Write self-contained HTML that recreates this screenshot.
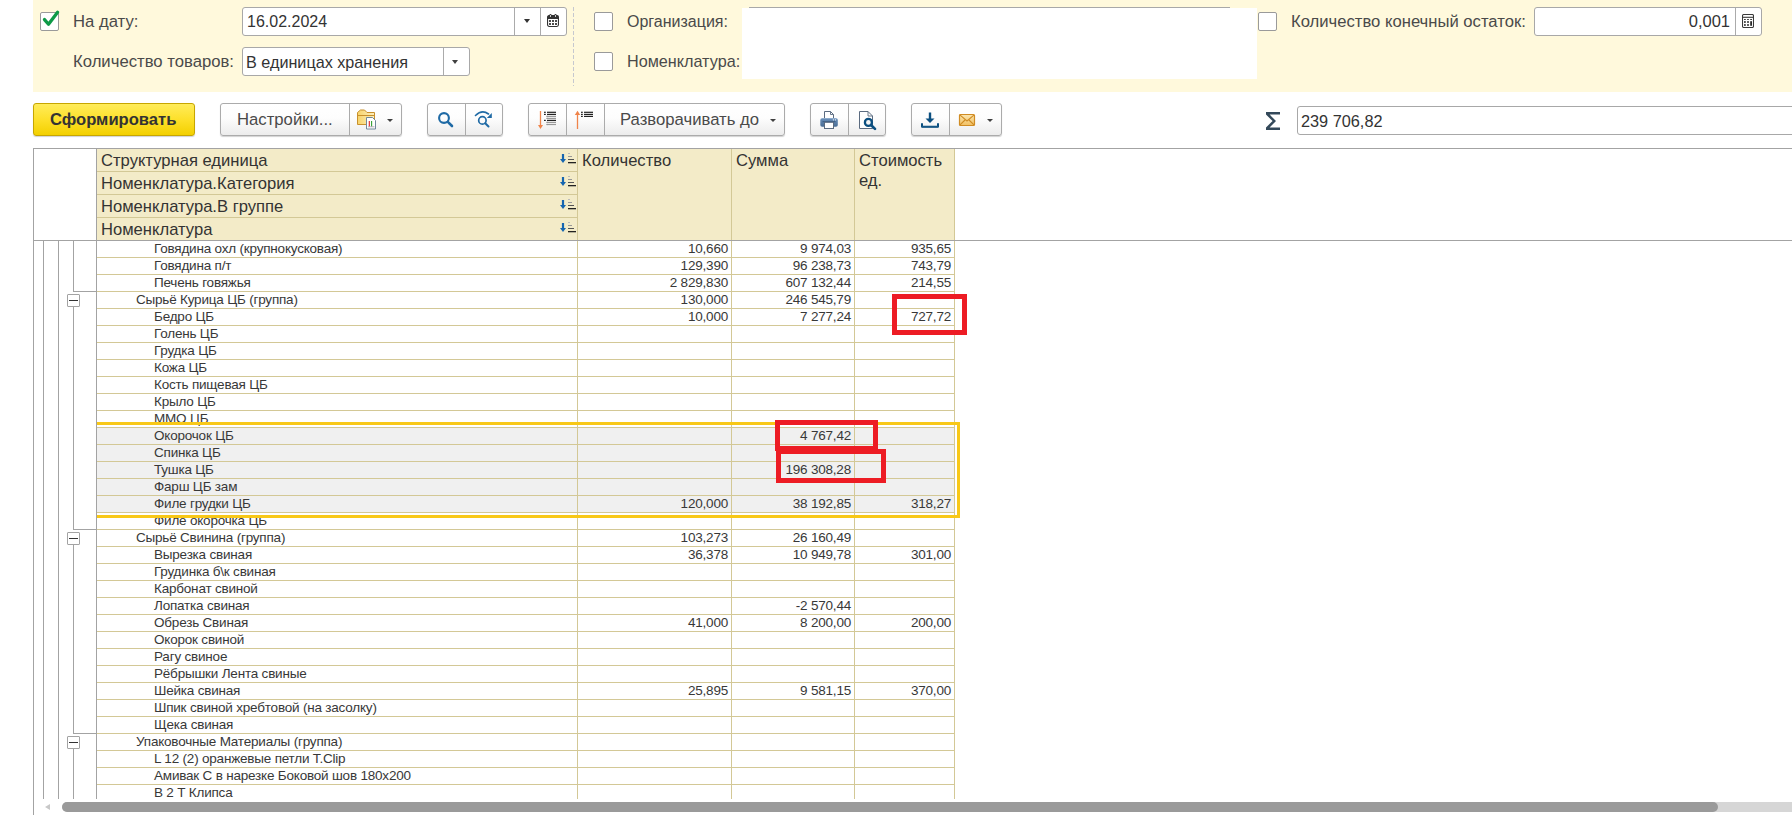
<!DOCTYPE html>
<html><head><meta charset="utf-8"><style>
*{box-sizing:border-box;margin:0;padding:0}
html,body{width:1792px;height:815px;overflow:hidden;background:#fff}
body{position:relative;font-family:"Liberation Sans",sans-serif;color:#404040}
.abs{position:absolute}
.lbl{position:absolute;font-size:16.7px;color:#4a4a4a;white-space:pre;line-height:20px;margin-top:1px}
.inp{position:absolute;background:#fff;border:1px solid #a8a8a8;border-radius:3px}
.cb{position:absolute;width:19px;height:19px;background:#fff;border:1px solid #9a9a9a;border-radius:2px}
.btn{position:absolute;height:33px;border:1px solid #ababab;border-radius:3px;background:linear-gradient(#ffffff 0%,#fdfdfd 45%,#ececec 100%);box-shadow:0 1px 1px rgba(0,0,0,.18)}
.sep{position:absolute;top:0;bottom:0;width:1px;background:#ababab}
.dd{position:absolute;width:0;height:0;border-left:3.5px solid transparent;border-right:3.5px solid transparent;border-top:4px solid #404040}
.t{position:absolute;white-space:pre;font-size:13.5px;letter-spacing:-0.2px;line-height:17px;color:#383838}
.r{text-align:right}
.hl{position:absolute;height:1px;background:#d3c896}
.vl{position:absolute;width:1px;background:#d3c896}
.gl{position:absolute;background:#a3a3a3}
</style></head><body>

<div class="abs" style="left:33px;top:0;width:1759px;height:92px;background:#fff9dc"></div>
<div class="cb" style="left:40px;top:12px"></div>
<svg class="abs" style="left:40px;top:9px" width="22" height="22" viewBox="0 0 22 22"><path d="M4.5 10.6 L8.5 15.3 L17.6 3.3" fill="none" stroke="#0e9a47" stroke-width="3.3" stroke-linecap="round" stroke-linejoin="round"/></svg>
<div class="lbl" style="left:73px;top:11px">На дату:</div>
<div class="lbl" style="left:73px;top:51px">Количество товаров:</div>
<div class="inp" style="left:242px;top:7px;width:325px;height:29px"><div class="sep" style="left:271px"></div><div class="sep" style="left:297px"></div></div>
<div class="lbl" style="left:247px;top:11px;font-size:16px;color:#333">16.02.2024</div>
<svg class="abs" style="left:547px;top:14px" width="12" height="13" viewBox="0 0 12 13"><rect x="0.55" y="1.55" width="10.9" height="10.9" rx="1.6" fill="#fff" stroke="#333" stroke-width="1.1"/><rect x="0.5" y="1.5" width="11" height="3.6" rx="1.2" fill="#333"/><rect x="2.4" y="0" width="2.2" height="3.6" rx="1.1" fill="#333"/><rect x="7.4" y="0" width="2.2" height="3.6" rx="1.1" fill="#333"/><ellipse cx="3.5" cy="2" rx=".5" ry="1" fill="#fff"/><ellipse cx="8.5" cy="2" rx=".5" ry="1" fill="#fff"/><g fill="#222"><rect x="2.1" y="6.1" width="1.8" height="1.8"/><rect x="5.1" y="6.1" width="1.8" height="1.8"/><rect x="8.1" y="6.1" width="1.8" height="1.8"/><rect x="2.1" y="9.1" width="1.8" height="1.8"/><rect x="5.1" y="9.1" width="1.8" height="1.8"/><rect x="8.1" y="9.1" width="1.8" height="1.8"/></g></svg>
<div class="dd" style="left:524px;top:19px;border-left-width:3px;border-right-width:3px;border-top-width:4px;border-top-color:#333"></div>
<div class="inp" style="left:242px;top:47px;width:228px;height:29px"><div class="sep" style="left:200px"></div></div>
<div class="lbl" style="left:246px;top:51px;font-size:16.2px;color:#333">В единицах хранения</div>
<div class="dd" style="left:452px;top:60px"></div>
<div class="abs" style="left:573px;top:7px;width:1px;height:79px;background:repeating-linear-gradient(#c6c8cf 0 4px,transparent 4px 6px)"></div>
<div class="cb" style="left:594px;top:12px"></div>
<div class="lbl" style="left:627px;top:11px;font-size:16px">Организация:</div>
<div class="cb" style="left:594px;top:52px"></div>
<div class="lbl" style="left:627px;top:50px;font-size:16.2px">Номенклатура:</div>
<div class="abs" style="left:749px;top:7px;width:481px;height:1px;background:#a8a8a8"></div>
<div class="abs" style="left:742px;top:8px;width:515px;height:71px;background:#fff"></div>
<div class="cb" style="left:1258px;top:12px"></div>
<div class="lbl" style="left:1291px;top:11px;font-size:16.65px">Количество конечный остаток:</div>
<div class="inp" style="left:1534px;top:7px;width:228px;height:29px"><div class="sep" style="left:200px"></div></div>
<div class="lbl" style="left:1600px;top:10px;width:130px;text-align:right;font-size:16.5px;color:#333">0,001</div>
<svg class="abs" style="left:1742px;top:14px" width="12" height="14" viewBox="0 0 12 14"><rect x="0.5" y="0.5" width="11" height="13" rx="1.2" fill="#fff" stroke="#3a3a3a" stroke-width="1.1"/><line x1="0.5" y1="3.3" x2="11.5" y2="3.3" stroke="#3a3a3a" stroke-width="1.1"/><g fill="#2a2a2a"><rect x="2" y="5" width="1.8" height="0.9"/><rect x="5.1" y="5" width="1.8" height="0.9"/><rect x="8.2" y="5" width="1.8" height="0.9"/><rect x="2" y="7.2" width="1.8" height="1.6"/><rect x="5.1" y="7.2" width="1.8" height="1.6"/><rect x="8.2" y="7.2" width="1.8" height="4.6"/><rect x="2" y="10.2" width="1.8" height="1.6"/><rect x="5.1" y="10.2" width="1.8" height="1.6"/></g></svg>
<div class="btn" style="left:33px;top:103px;width:162px;border-color:#c7a600;background:linear-gradient(#ffec5a 0%,#fde02a 50%,#f3d000 100%)"></div>
<div class="lbl" style="left:50px;top:109px;font-weight:bold;font-size:16.6px;color:#333">Сформировать</div>
<div class="btn" style="left:220px;top:103px;width:182px"><div class="sep" style="left:128px"></div></div>
<div class="lbl" style="left:237px;top:109px">Настройки...</div>
<svg class="abs" style="left:356px;top:109px" width="24" height="22" viewBox="0 0 24 22"><defs><linearGradient id="fg" x1="0" y1="0" x2="1" y2="0"><stop offset="0" stop-color="#f7d36a"/><stop offset="1" stop-color="#fdf0c0"/></linearGradient></defs><path d="M1.5 15.5 L1.5 3.5 L4.5 1 L8.5 1 L11 3.5 L18.5 3.5 L18.5 15.5 Z" fill="url(#fg)" stroke="#c8902c" stroke-width="1"/><line x1="1.5" y1="6.5" x2="18.5" y2="6.5" stroke="#c8902c" stroke-width="1"/><path d="M10.5 8.5 L16.5 8.5 L19.5 11.5 L19.5 20 L10.5 20 Z" fill="#fff" stroke="#70889a" stroke-width="1"/><line x1="13.3" y1="12" x2="13.3" y2="17.5" stroke="#e02020" stroke-width="1.1"/><line x1="15.6" y1="12" x2="15.6" y2="17.5" stroke="#30a030" stroke-width="1.1"/><line x1="12" y1="17.8" x2="18.5" y2="17.8" stroke="#9a8aa0" stroke-width=".7"/></svg>
<div class="dd" style="left:387px;top:119px;border-left-width:3px;border-right-width:3px;border-top-width:3px"></div>
<div class="btn" style="left:427px;top:103px;width:76px"><div class="sep" style="left:37px"></div></div>
<svg class="abs" style="left:434px;top:108px" width="24" height="24" viewBox="0 0 24 24"><circle cx="10" cy="10" r="4.9" fill="none" stroke="#1f6aa5" stroke-width="2.1"/><line x1="13.8" y1="13.8" x2="18" y2="18" stroke="#1f6aa5" stroke-width="2.6" stroke-linecap="round"/></svg>
<svg class="abs" style="left:472px;top:108px" width="24" height="24" viewBox="0 0 24 24"><path d="M3.5 7.5 Q10 1 16.5 6" fill="none" stroke="#1f6aa5" stroke-width="1.6" stroke-linecap="round"/><path d="M19.8 5 L19.8 10 L14.8 10 Z" fill="#1f6aa5"/><circle cx="10.4" cy="12.4" r="3.7" fill="none" stroke="#1f6aa5" stroke-width="1.7"/><line x1="13.2" y1="15.2" x2="16.5" y2="18.5" stroke="#1f6aa5" stroke-width="2" stroke-linecap="round"/></svg>
<div class="btn" style="left:528px;top:103px;width:257px"><div class="sep" style="left:37px"></div><div class="sep" style="left:75px"></div></div>
<svg class="abs" style="left:534px;top:108px" width="26" height="24" viewBox="0 0 26 24"><line x1="6.5" y1="3" x2="6.5" y2="18" stroke="#f0844a" stroke-width="1.3"/><path d="M4 17 L9 17 L6.5 21 Z" fill="#f0844a"/><rect x="10" y="3.6999999999999997" width="1.8" height="1.2" fill="#222"/><rect x="13" y="3.6999999999999997" width="9" height="1.2" fill="#222"/><rect x="10" y="5.800000000000001" width="1.8" height="1.2" fill="#222"/><rect x="13" y="5.800000000000001" width="9" height="1.2" fill="#222"/><rect x="12.3" y="7.800000000000001" width="1.8" height="1.2" fill="#999"/><rect x="13" y="7.800000000000001" width="9" height="1.2" fill="#999"/><rect x="12.3" y="9.8" width="1.8" height="1.2" fill="#999"/><rect x="13" y="9.8" width="9" height="1.2" fill="#999"/><rect x="10" y="11.8" width="1.8" height="1.2" fill="#222"/><rect x="13" y="11.8" width="9" height="1.2" fill="#222"/><rect x="12.3" y="13.8" width="1.8" height="1.2" fill="#999"/><rect x="13" y="13.8" width="9" height="1.2" fill="#999"/><rect x="12.3" y="15.9" width="1.8" height="1.2" fill="#999"/><rect x="13" y="15.9" width="9" height="1.2" fill="#999"/></svg>
<svg class="abs" style="left:571px;top:108px" width="26" height="24" viewBox="0 0 26 24"><line x1="6.5" y1="5" x2="6.5" y2="21" stroke="#f0844a" stroke-width="1.3"/><path d="M3.8 7 L9.2 7 L6.5 2.8 Z" fill="#f0844a"/><g fill="#222"><rect x="10" y="3.7" width="1.8" height="1.2"/><rect x="13" y="3.7" width="9" height="1.2"/><rect x="10" y="5.8" width="1.8" height="1.2"/><rect x="13" y="5.8" width="9" height="1.2"/><rect x="10" y="7.8" width="1.8" height="1.2"/><rect x="13" y="7.8" width="9" height="1.2"/></g></svg>
<div class="lbl" style="left:620px;top:109px">Разворачивать до</div>
<div class="dd" style="left:770px;top:119px;border-left-width:3px;border-right-width:3px;border-top-width:3px"></div>
<div class="btn" style="left:810px;top:103px;width:76px"><div class="sep" style="left:37px"></div></div>
<svg class="abs" style="left:812px;top:104px" width="74" height="30" viewBox="0 0 74 30"><defs><linearGradient id="pg" x1="0" y1="0" x2="0" y2="1"><stop offset="0" stop-color="#6a90bb"/><stop offset="1" stop-color="#4a6d94"/></linearGradient></defs><path d="M12.5 14 V7.5 H18.5 L21.5 10.5 V14" fill="#fff" stroke="#5b6b80" stroke-width="1"/><path d="M18.5 7.5 V10.5 H21.5" fill="none" stroke="#5b6b80" stroke-width=".9"/><rect x="8.3" y="14.3" width="17.5" height="8.4" rx="1.8" fill="url(#pg)"/><rect x="10.5" y="17.1" width="13" height="1.1" fill="#3f5f85"/><circle cx="21.4" cy="15.8" r=".65" fill="#fff"/><circle cx="23.5" cy="15.8" r=".65" fill="#fff"/><rect x="12.5" y="18.3" width="9" height="6.2" fill="#fff" stroke="#5b6b80" stroke-width="1"/><path d="M47.5 7.5 H56 L60.5 12 V24.5 H47.5 Z" fill="#fff" stroke="#5b6b80" stroke-width="1"/><path d="M56 7.5 V12 H60.5" fill="none" stroke="#5b6b80" stroke-width=".9"/><circle cx="56.4" cy="18.4" r="3.5" fill="#f6f6f6" stroke="#0b4f80" stroke-width="2.3"/><line x1="59.2" y1="21.2" x2="63" y2="24.9" stroke="#0b4f80" stroke-width="2.7" stroke-linecap="round"/></svg>
<div class="btn" style="left:911px;top:103px;width:91px"><div class="sep" style="left:37px"></div></div>
<svg class="abs" style="left:920px;top:111px" width="20" height="18" viewBox="0 0 20 18"><line x1="10" y1="1.5" x2="10" y2="9" stroke="#0b4f80" stroke-width="2.4"/><path d="M5.5 7.5 L14.5 7.5 L10 12 Z" fill="#0b4f80"/><path d="M2 13 L2 15.7 L18 15.7 L18 13" fill="none" stroke="#0b4f80" stroke-width="2" stroke-linejoin="round" stroke-linecap="round"/><rect x="2" y="15.2" width="16" height="1.2" fill="#1a5a88"/></svg>
<svg class="abs" style="left:958px;top:113px" width="18" height="14" viewBox="0 0 18 14"><defs><linearGradient id="eg" x1="0" y1="0" x2="0" y2="1"><stop offset="0" stop-color="#fbe6b0"/><stop offset="1" stop-color="#f2c062"/></linearGradient></defs><rect x="1.5" y="1.5" width="15" height="11" rx="1" fill="url(#eg)" stroke="#d08c24" stroke-width="1.2"/><path d="M1.8 1.8 L9 8 L16.2 1.8 M1.8 12.2 L7 7 M16.2 12.2 L11 7" fill="none" stroke="#d08c24" stroke-width="1.1"/></svg>
<div class="dd" style="left:987px;top:119px;border-left-width:3px;border-right-width:3px;border-top-width:3px"></div>
<svg class="abs" style="left:1265px;top:111px" width="17" height="20" viewBox="0 0 17 20"><path d="M1 1 L15 1 L15 3.6 L4.6 3.6 L11 10 L4.6 16.4 L15 16.4 L15 19 L1 19 L1 16.6 L7.6 10 L1 3.4 Z" fill="#34495a"/></svg>
<div class="inp" style="left:1297px;top:106px;width:520px;height:29px;border-radius:3px"></div>
<div class="lbl" style="left:1301px;top:110px;font-size:16.3px;color:#333">239 706,82</div>
<div class="gl" style="left:33px;top:148px;width:1759px;height:1px"></div>
<div class="gl" style="left:33px;top:148px;width:1px;height:667px"></div>
<div class="abs" style="left:97px;top:149px;width:858px;height:91px;background:#f3ebc8"></div>
<div class="hl" style="left:97px;top:171px;width:480px"></div>
<div class="hl" style="left:97px;top:194px;width:480px"></div>
<div class="hl" style="left:97px;top:217px;width:480px"></div>
<div class="vl" style="left:577px;top:149px;height:91px"></div>
<div class="vl" style="left:731px;top:149px;height:91px"></div>
<div class="vl" style="left:854px;top:149px;height:91px"></div>
<div class="vl" style="left:954px;top:149px;height:91px"></div>
<div class="gl" style="left:96px;top:149px;width:1px;height:650px"></div>
<div class="gl" style="left:33px;top:240px;width:1759px;height:1px"></div>
<div class="lbl" style="left:101px;top:150px;font-size:16.6px;color:#333">Структурная единица</div>
<div class="lbl" style="left:101px;top:173px;font-size:16.6px;color:#333">Номенклатура.Категория</div>
<div class="lbl" style="left:101px;top:196px;font-size:16.6px;color:#333">Номенклатура.В группе</div>
<div class="lbl" style="left:101px;top:219px;font-size:16.6px;color:#333">Номенклатура</div>
<svg class="abs" style="left:558px;top:152px" width="19" height="16" viewBox="0 0 19 16"><line x1="5" y1="2" x2="5" y2="7.5" stroke="#1565b0" stroke-width="2.2"/><path d="M2 7 L8 7 L5 11 Z" fill="#1565b0"/><rect x="10" y="1" width="2" height="1" fill="#bbb"/><rect x="10" y="4" width="4" height="1" fill="#999"/><rect x="10" y="7" width="6" height="1" fill="#555"/><rect x="10" y="10" width="8" height="1.3" fill="#222"/></svg>
<svg class="abs" style="left:558px;top:175px" width="19" height="16" viewBox="0 0 19 16"><line x1="5" y1="2" x2="5" y2="7.5" stroke="#1565b0" stroke-width="2.2"/><path d="M2 7 L8 7 L5 11 Z" fill="#1565b0"/><rect x="10" y="1" width="2" height="1" fill="#bbb"/><rect x="10" y="4" width="4" height="1" fill="#999"/><rect x="10" y="7" width="6" height="1" fill="#555"/><rect x="10" y="10" width="8" height="1.3" fill="#222"/></svg>
<svg class="abs" style="left:558px;top:198px" width="19" height="16" viewBox="0 0 19 16"><line x1="5" y1="2" x2="5" y2="7.5" stroke="#1565b0" stroke-width="2.2"/><path d="M2 7 L8 7 L5 11 Z" fill="#1565b0"/><rect x="10" y="1" width="2" height="1" fill="#bbb"/><rect x="10" y="4" width="4" height="1" fill="#999"/><rect x="10" y="7" width="6" height="1" fill="#555"/><rect x="10" y="10" width="8" height="1.3" fill="#222"/></svg>
<svg class="abs" style="left:558px;top:221px" width="19" height="16" viewBox="0 0 19 16"><line x1="5" y1="2" x2="5" y2="7.5" stroke="#1565b0" stroke-width="2.2"/><path d="M2 7 L8 7 L5 11 Z" fill="#1565b0"/><rect x="10" y="1" width="2" height="1" fill="#bbb"/><rect x="10" y="4" width="4" height="1" fill="#999"/><rect x="10" y="7" width="6" height="1" fill="#555"/><rect x="10" y="10" width="8" height="1.3" fill="#222"/></svg>
<div class="lbl" style="left:582px;top:150px;font-size:16.6px;color:#333">Количество</div>
<div class="lbl" style="left:736px;top:150px;font-size:16.6px;color:#333">Сумма</div>
<div class="lbl" style="left:859px;top:150px;font-size:16.6px;color:#333;line-height:20px">Стоимость
ед.</div>
<div class="abs" style="left:97px;top:241px;width:1695px;height:558px;overflow:hidden">
<div class="abs" style="left:0;top:187px;width:858px;height:85px;background:#f0f0f0"></div>
<div class="t" style="left:57px;top:-1px">Говядина охл (крупнокусковая)</div>
<div class="t r" style="left:480px;top:-1px;width:151px">10,660</div>
<div class="t r" style="left:634px;top:-1px;width:120px">9 974,03</div>
<div class="t r" style="left:757px;top:-1px;width:97px">935,65</div>
<div class="hl" style="left:0;top:16px;width:858px"></div>
<div class="t" style="left:57px;top:16px">Говядина п/т</div>
<div class="t r" style="left:480px;top:16px;width:151px">129,390</div>
<div class="t r" style="left:634px;top:16px;width:120px">96 238,73</div>
<div class="t r" style="left:757px;top:16px;width:97px">743,79</div>
<div class="hl" style="left:0;top:33px;width:858px"></div>
<div class="t" style="left:57px;top:33px">Печень говяжья</div>
<div class="t r" style="left:480px;top:33px;width:151px">2 829,830</div>
<div class="t r" style="left:634px;top:33px;width:120px">607 132,44</div>
<div class="t r" style="left:757px;top:33px;width:97px">214,55</div>
<div class="hl" style="left:0;top:50px;width:858px"></div>
<div class="t" style="left:39px;top:50px">Сырьё Курица ЦБ (группа)</div>
<div class="t r" style="left:480px;top:50px;width:151px">130,000</div>
<div class="t r" style="left:634px;top:50px;width:120px">246 545,79</div>
<div class="hl" style="left:0;top:67px;width:858px"></div>
<div class="t" style="left:57px;top:67px">Бедро ЦБ</div>
<div class="t r" style="left:480px;top:67px;width:151px">10,000</div>
<div class="t r" style="left:634px;top:67px;width:120px">7 277,24</div>
<div class="t r" style="left:757px;top:67px;width:97px">727,72</div>
<div class="hl" style="left:0;top:84px;width:858px"></div>
<div class="t" style="left:57px;top:84px">Голень ЦБ</div>
<div class="hl" style="left:0;top:101px;width:858px"></div>
<div class="t" style="left:57px;top:101px">Грудка ЦБ</div>
<div class="hl" style="left:0;top:118px;width:858px"></div>
<div class="t" style="left:57px;top:118px">Кожа ЦБ</div>
<div class="hl" style="left:0;top:135px;width:858px"></div>
<div class="t" style="left:57px;top:135px">Кость пищевая ЦБ</div>
<div class="hl" style="left:0;top:152px;width:858px"></div>
<div class="t" style="left:57px;top:152px">Крыло ЦБ</div>
<div class="hl" style="left:0;top:169px;width:858px"></div>
<div class="t" style="left:57px;top:169px">ММО ЦБ</div>
<div class="hl" style="left:0;top:186px;width:858px"></div>
<div class="t" style="left:57px;top:186px">Окорочок ЦБ</div>
<div class="t r" style="left:634px;top:186px;width:120px">4 767,42</div>
<div class="hl" style="left:0;top:203px;width:858px"></div>
<div class="t" style="left:57px;top:203px">Спинка ЦБ</div>
<div class="hl" style="left:0;top:220px;width:858px"></div>
<div class="t" style="left:57px;top:220px">Тушка ЦБ</div>
<div class="t r" style="left:634px;top:220px;width:120px">196 308,28</div>
<div class="hl" style="left:0;top:237px;width:858px"></div>
<div class="t" style="left:57px;top:237px">Фарш ЦБ зам</div>
<div class="hl" style="left:0;top:254px;width:858px"></div>
<div class="t" style="left:57px;top:254px">Филе грудки ЦБ</div>
<div class="t r" style="left:480px;top:254px;width:151px">120,000</div>
<div class="t r" style="left:634px;top:254px;width:120px">38 192,85</div>
<div class="t r" style="left:757px;top:254px;width:97px">318,27</div>
<div class="hl" style="left:0;top:271px;width:858px"></div>
<div class="t" style="left:57px;top:271px">Филе окорочка ЦБ</div>
<div class="hl" style="left:0;top:288px;width:858px"></div>
<div class="t" style="left:39px;top:288px">Сырьё Свинина (группа)</div>
<div class="t r" style="left:480px;top:288px;width:151px">103,273</div>
<div class="t r" style="left:634px;top:288px;width:120px">26 160,49</div>
<div class="hl" style="left:0;top:305px;width:858px"></div>
<div class="t" style="left:57px;top:305px">Вырезка свиная</div>
<div class="t r" style="left:480px;top:305px;width:151px">36,378</div>
<div class="t r" style="left:634px;top:305px;width:120px">10 949,78</div>
<div class="t r" style="left:757px;top:305px;width:97px">301,00</div>
<div class="hl" style="left:0;top:322px;width:858px"></div>
<div class="t" style="left:57px;top:322px">Грудинка б\к свиная</div>
<div class="hl" style="left:0;top:339px;width:858px"></div>
<div class="t" style="left:57px;top:339px">Карбонат свиной</div>
<div class="hl" style="left:0;top:356px;width:858px"></div>
<div class="t" style="left:57px;top:356px">Лопатка свиная</div>
<div class="t r" style="left:634px;top:356px;width:120px">-2 570,44</div>
<div class="hl" style="left:0;top:373px;width:858px"></div>
<div class="t" style="left:57px;top:373px">Обрезь Свиная</div>
<div class="t r" style="left:480px;top:373px;width:151px">41,000</div>
<div class="t r" style="left:634px;top:373px;width:120px">8 200,00</div>
<div class="t r" style="left:757px;top:373px;width:97px">200,00</div>
<div class="hl" style="left:0;top:390px;width:858px"></div>
<div class="t" style="left:57px;top:390px">Окорок свиной</div>
<div class="hl" style="left:0;top:407px;width:858px"></div>
<div class="t" style="left:57px;top:407px">Рагу свиное</div>
<div class="hl" style="left:0;top:424px;width:858px"></div>
<div class="t" style="left:57px;top:424px">Рёбрышки Лента свиные</div>
<div class="hl" style="left:0;top:441px;width:858px"></div>
<div class="t" style="left:57px;top:441px">Шейка свиная</div>
<div class="t r" style="left:480px;top:441px;width:151px">25,895</div>
<div class="t r" style="left:634px;top:441px;width:120px">9 581,15</div>
<div class="t r" style="left:757px;top:441px;width:97px">370,00</div>
<div class="hl" style="left:0;top:458px;width:858px"></div>
<div class="t" style="left:57px;top:458px">Шпик свиной хребтовой (на засолку)</div>
<div class="hl" style="left:0;top:475px;width:858px"></div>
<div class="t" style="left:57px;top:475px">Щека свиная</div>
<div class="hl" style="left:0;top:492px;width:858px"></div>
<div class="t" style="left:39px;top:492px">Упаковочные Материалы (группа)</div>
<div class="hl" style="left:0;top:509px;width:858px"></div>
<div class="t" style="left:57px;top:509px">L 12 (2) оранжевые петли T.Clip</div>
<div class="hl" style="left:0;top:526px;width:858px"></div>
<div class="t" style="left:57px;top:526px">Амивак С в нарезке Боковой шов 180х200</div>
<div class="hl" style="left:0;top:543px;width:858px"></div>
<div class="t" style="left:57px;top:543px">В 2 Т Клипса</div>
<div class="hl" style="left:0;top:560px;width:858px"></div>
<div class="vl" style="left:480px;top:0;height:558px"></div>
<div class="vl" style="left:634px;top:0;height:558px"></div>
<div class="vl" style="left:757px;top:0;height:558px"></div>
<div class="vl" style="left:857px;top:0;height:558px"></div>
</div>
<div class="gl" style="left:43px;top:241px;width:1px;height:558px"></div>
<div class="gl" style="left:58px;top:241px;width:1px;height:558px"></div>
<div class="gl" style="left:73px;top:241px;width:1px;height:50px"></div>
<div class="gl" style="left:73px;top:291px;width:24px;height:1px"></div>
<div class="abs" style="left:67px;top:294px;width:13px;height:13px;border:1px solid #a3a3a3;background:#fff;border-radius:1px"><div class="abs" style="left:1px;top:5px;width:9px;height:1px;background:#333"></div></div>
<div class="gl" style="left:73px;top:307px;width:1px;height:222px"></div>
<div class="gl" style="left:73px;top:529px;width:24px;height:1px"></div>
<div class="abs" style="left:67px;top:532px;width:13px;height:13px;border:1px solid #a3a3a3;background:#fff;border-radius:1px"><div class="abs" style="left:1px;top:5px;width:9px;height:1px;background:#333"></div></div>
<div class="gl" style="left:73px;top:545px;width:1px;height:188px"></div>
<div class="gl" style="left:73px;top:733px;width:24px;height:1px"></div>
<div class="abs" style="left:67px;top:736px;width:13px;height:13px;border:1px solid #a3a3a3;background:#fff;border-radius:1px"><div class="abs" style="left:1px;top:5px;width:9px;height:1px;background:#333"></div></div>
<div class="gl" style="left:73px;top:749px;width:1px;height:50px"></div>
<div class="abs" style="left:97px;top:422px;width:863px;height:96px;border:3px solid #f8c817;border-left:none"></div>
<div class="abs" style="left:892px;top:294px;width:75px;height:41px;border:5px solid #ed1c24"></div>
<div class="abs" style="left:775px;top:420px;width:103px;height:31px;border:5px solid #ed1c24"></div>
<div class="abs" style="left:776px;top:449px;width:110px;height:34px;border:5px solid #ed1c24"></div>
<div class="abs" style="left:62px;top:802px;width:1730px;height:10px;background:#d6d6d6;border-radius:5px 0 0 5px"></div>
<div class="abs" style="left:62px;top:802px;width:1656px;height:10px;background:#9a9a9a;border-radius:5px"></div>
<div class="abs" style="left:45px;top:804px;width:0;height:0;border-top:3px solid transparent;border-bottom:3px solid transparent;border-right:5px solid #c8c8c8"></div>
</body></html>
